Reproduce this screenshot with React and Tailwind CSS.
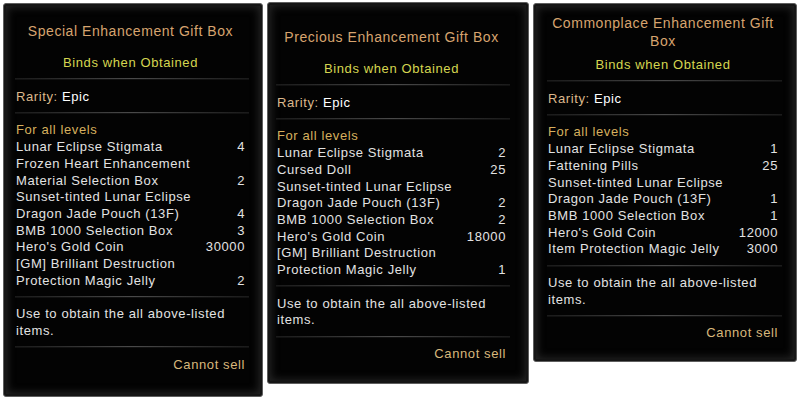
const panels = [
  {
    title: 'Special Enhancement Gift Box',
    box: 'mt-[1px] w-[260px] h-[394px] pl-[12px] pr-[17px] pt-[18px]',
    bindsGap: 'mt-[15px]',
    items: [
      ['Lunar Eclipse Stigmata', '4'],
      ['Frozen Heart Enhancement', ''],
      ['Material Selection Box', '2'],
      ['Sunset-tinted Lunar Eclipse', ''],
      ['Dragon Jade Pouch (13F)', '4'],
      ['BMB 1000 Selection Box', '3'],
      ["Hero's Gold Coin", '30000'],
      ['[GM] Brilliant Destruction', ''],
      ['Protection Magic Jelly', '2'],
    ],
  },
  {
    title: 'Precious Enhancement Gift Box',
    box: 'w-[262px] h-[382px] pl-[9px] pr-[22px] pt-[25px]',
    bindsGap: 'mt-[15px]',
    items: [
      ['Lunar Eclipse Stigmata', '2'],
      ['Cursed Doll', '25'],
      ['Sunset-tinted Lunar Eclipse', ''],
      ['Dragon Jade Pouch (13F)', '2'],
      ['BMB 1000 Selection Box', '2'],
      ["Hero's Gold Coin", '18000'],
      ['[GM] Brilliant Destruction', ''],
      ['Protection Magic Jelly', '1'],
    ],
  },
  {
    title: 'Commonplace Enhancement Gift Box',
    box: 'mt-[1px] w-[264px] h-[359px] pl-[14px] pr-[18px] pt-[10px]',
    bindsGap: 'mt-[7px]',
    items: [
      ['Lunar Eclipse Stigmata', '1'],
      ['Fattening Pills', '25'],
      ['Sunset-tinted Lunar Eclipse', ''],
      ['Dragon Jade Pouch (13F)', '1'],
      ['BMB 1000 Selection Box', '1'],
      ["Hero's Gold Coin", '12000'],
      ['Item Protection Magic Jelly', '3000'],
    ],
  },
];

const Divider = () => (
  <div className="-ml-[1px] -mr-[4px] mt-[6.5px] mb-[8.5px] h-[2px] bg-gradient-to-r from-[#1a1a1a] via-[#4a4a4a] to-[#1a1a1a] border-b border-[#111]" />
);

const Panel = ({ p }) => (
  <div
    className={`${p.box} shrink-0 flex flex-col rounded-[3px] border border-[#5e5e5e] bg-[#030303] shadow-[inset_0_0_0_2px_#151515,inset_0_0_9px_3px_#262626] text-[13px] leading-[16.7px] tracking-[0.6px] text-[#e2e2e2]`}
  >
    <h2 className="text-center text-[14px] leading-[18px] tracking-[0.55px] text-[#d7a46f]">{p.title}</h2>
    <p className={`${p.bindsGap} text-center text-[#d5d650]`}>Binds when Obtained</p>
    <Divider />
    <p>
      <span className="text-[#dcb98c]">Rarity:</span> <span className="text-white">Epic</span>
    </p>
    <Divider />
    <p className="text-[#d6b05e]">For all levels</p>
    {p.items.map(([name, qty], i) => (
      <div key={i} className="flex justify-between">
        <span>{name}</span>
        <span>{qty}</span>
      </div>
    ))}
    <Divider />
    <p>Use to obtain the all above-listed items.</p>
    <Divider />
    <p className="text-right text-[#d8b87c]">Cannot sell</p>
  </div>
);

export default function App() {
  return (
    <div className="w-[801px] h-[400px] bg-white flex items-start gap-[4px] pl-[3px] pt-[2px] font-['Liberation_Sans',Arial,sans-serif]">
      {panels.map((p, i) => (
        <Panel key={i} p={p} />
      ))}
    </div>
  );
}
